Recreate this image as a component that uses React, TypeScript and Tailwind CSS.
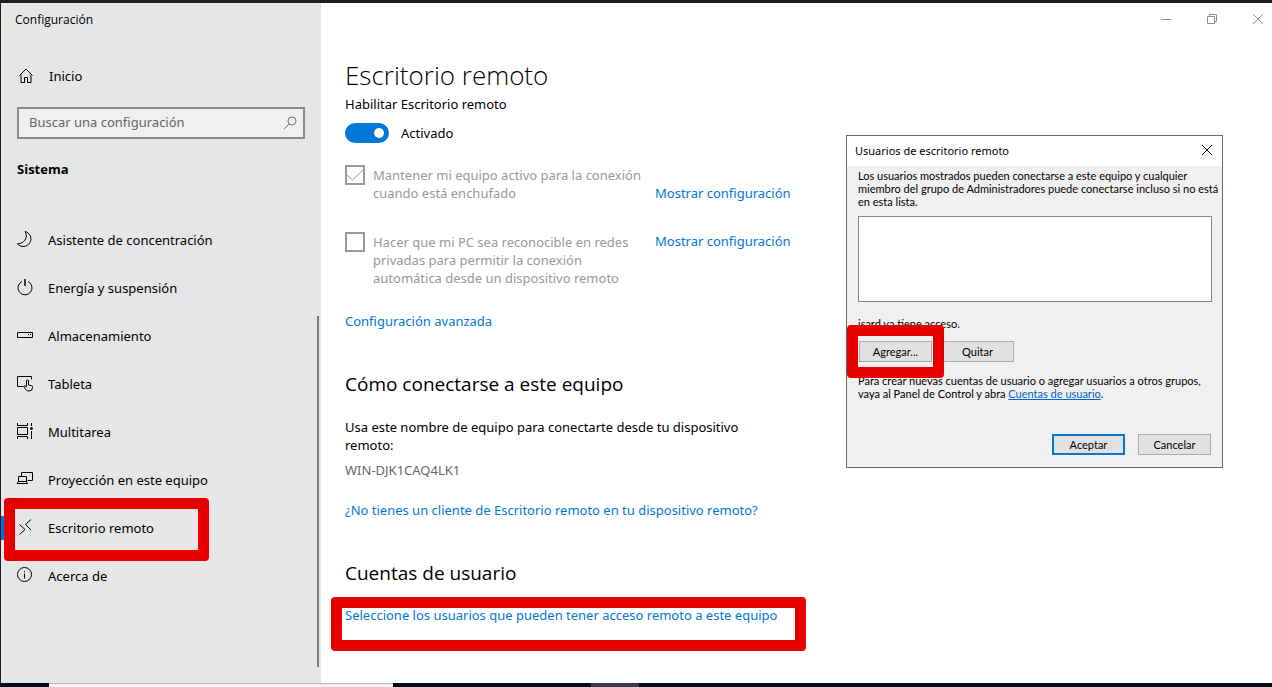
import { useState, type ReactNode } from "react";

type NavItem = {
  label: string;
  icon: ReactNode;
  active?: boolean;
};

function Icon({ children }: { children: ReactNode }) {
  return (
    <svg
      aria-hidden="true"
      viewBox="0 0 16 16"
      className="h-4 w-4 shrink-0 overflow-visible"
      fill="none"
      stroke="currentColor"
      strokeWidth="1"
    >
      {children}
    </svg>
  );
}

const NAV_ITEMS: NavItem[] = [
  {
    label: "Asistente de concentración",
    icon: (
      <Icon>
        <path d="M8 -.5A7.600 7.600 0 1 1 .5 11.800C5.500 11.800 9.300 8.100 9.300 4 9.300 2.500 8.900 .6 8 -.5Z" />
      </Icon>
    ),
  },
  {
    label: "Energía y suspensión",
    icon: (
      <Icon>
        <path d="M5 1.500a7 7 0 1 0 6 0" />
        <path d="M8 -1v7" strokeWidth="1.500" />
      </Icon>
    ),
  },
  {
    label: "Almacenamiento",
    icon: (
      <Icon>
        <path d="M.5 4.500h15v5H.5z" />
        <path d="M11 6.500h1M13 6.500h1" />
      </Icon>
    ),
  },
  {
    label: "Tableta",
    icon: (
      <Icon>
        <path d="M6.500 10.500h-6v-10h14v3" />
        <path d="M9.500 10.500V5a1 1 0 0 1 2 0v4l3 .7a1.200 1.200 0 0 1 1 1.300v.5a3.500 3.500 0 0 1-3.500 3.500c-2 0-3-.8-3.800-2.300L7 10.800c-.3-1 .8-1.400 1.500-.8l1 1.200" />
      </Icon>
    ),
  },
  {
    label: "Multitarea",
    icon: (
      <Icon>
        <path d="M.5 3.500h10v7H.5zM.5 -1v2.500h10V-1M.5 15v-2.500h10V15M14.500 -1v3M14.500 7v8" />
        <circle cx="14.500" cy="4.500" r="1" fill="currentColor" />
      </Icon>
    ),
  },
  {
    label: "Proyección en este equipo",
    icon: (
      <Icon>
        <path d="M4.500 4.500v-4h11v8h-5" />
        <path d="M1.500 10V4.500h8V10M0 11.500L1.500 9.500h8l1 2z" />
      </Icon>
    ),
  },
  {
    label: "Escritorio remoto",
    active: true,
    icon: (
      <Icon>
        <path d="M2.500 4.500l5.500 5-5.500 5M14 -.5l-5.500 5 5.500 5.500" />
      </Icon>
    ),
  },
  {
    label: "Acerca de",
    icon: (
      <Icon>
        <circle cx="7.500" cy="6.500" r="7" />
        <path d="M7.500 5.500v5M7.500 3v1.200" />
      </Icon>
    ),
  },
];

function Highlight({ className }: { className: string }) {
  return (
    <span
      aria-hidden="true"
      className={`pointer-events-none absolute z-10 rounded-[4px] border-[11px] border-[#e80000] ${className}`}
    />
  );
}

function Sidebar() {
  return (
    <aside className="relative flex w-80 shrink-0 flex-col bg-[#e6e6e6]">
      <div className="flex h-[34px] items-center px-[14px] font-['Open_Sans',sans-serif] text-[12px]">
        Configuración
      </div>

      <a href="#inicio" className="mt-[15px] flex h-12 items-center gap-[14px] px-[18px]">
        <Icon>
          <path d="M.5 7.500L7 1l6.500 6.500M2 6.500v8h3.500v-5h3v5H12v-8" />
        </Icon>
        Inicio
      </a>

      <div className="mx-4 mt-[7px] flex h-8 items-center border-2 border-[#8a8a8a] bg-[#f0f0f0] pr-1.5 pl-[10px]">
        <input
          type="text"
          aria-label="Buscar una configuración"
          placeholder="Buscar una configuración"
          className="h-5 min-w-0 flex-1 bg-transparent pb-0.5 outline-none placeholder:text-[#666666]"
        />
        <svg
          aria-hidden="true"
          viewBox="0 0 14 14"
          className="h-[14px] w-[14px] text-[#777777]"
          fill="none"
          stroke="currentColor"
        >
          <circle cx="9" cy="5" r="4" />
          <path d="M6 8L1 13" />
        </svg>
      </div>

      <h2 className="mx-4 mt-[18px] font-['Open_Sans',sans-serif] leading-6 font-bold">Sistema</h2>

      <nav className="mt-[35px] pb-4">
        <ul>
          {NAV_ITEMS.map((item) => (
            <li key={item.label} className="relative">
              {item.active ? (
                <span className="absolute top-3 left-0 h-6 w-1 bg-[#0078d7]" />
              ) : null}
              <a
                href="#seccion"
                aria-current={item.active ? "page" : undefined}
                className="flex h-12 items-center gap-[15px] px-4"
              >
                {item.icon}
                {item.label}
              </a>
              {item.active ? <Highlight className="-top-1.5 left-[3px] h-[63px] w-[205px]" /> : null}
            </li>
          ))}
        </ul>
      </nav>

      <div className="absolute top-[313px] right-0.5 bottom-4 w-0.5 bg-[#7a7a7a]" />
    </aside>
  );
}

function WindowControls() {
  const button = "flex h-8 w-7 items-center justify-center";

  return (
    <div className="flex justify-end gap-[18px] pb-0.5 text-[#8f8f8f]">
      <button type="button" aria-label="Minimizar" className={button}>
        <svg viewBox="0 0 10 10" className="h-[10px] w-[10px]" fill="none" stroke="currentColor">
          <path d="M0 5.500h10" />
        </svg>
      </button>
      <button type="button" aria-label="Restaurar" className={button}>
        <svg viewBox="0 0 10 10" className="h-[10px] w-[10px]" fill="none" stroke="currentColor">
          <path d="M.5 2.500h7v7h-7zM2.500 2.500v-2h7v7h-2" />
        </svg>
      </button>
      <button type="button" aria-label="Cerrar" className={button}>
        <svg viewBox="0 0 10 10" className="h-[10px] w-[10px]" fill="none" stroke="currentColor">
          <path d="M0 0l10 10M10 0L0 10" />
        </svg>
      </button>
    </div>
  );
}

function OptionRow(props: {
  id: string;
  checked: boolean;
  label: string;
  className: string;
  linkClassName: string;
}) {
  const { id, checked, label, className, linkClassName } = props;

  return (
    <div className={`flex ${className}`}>
      <div className="flex w-[310px] shrink-0 gap-2">
        <span className="relative h-5 w-5 shrink-0">
          <input
            id={id}
            type="checkbox"
            checked={checked}
            disabled
            readOnly
            className="block h-5 w-5 appearance-none border-2 border-[#999999] bg-white"
          />
          {checked ? (
            <svg
              aria-hidden="true"
              viewBox="0 0 20 20"
              className="absolute inset-0 h-5 w-5"
              fill="none"
              stroke="#999999"
            >
              <path d="M2 10l5.500 5L18 5" />
            </svg>
          ) : null}
        </span>
        <label htmlFor={id} className="w-[275px] pt-px text-[#999999]">
          {label}
        </label>
      </div>
      <a href="#configuracion" className={`text-[#0078d7] ${linkClassName}`}>
        Mostrar configuración
      </a>
    </div>
  );
}

function RemoteDesktopSettings() {
  const [enabled, setEnabled] = useState(true);

  return (
    <div className="px-6">
      <h1 className="mt-[18px] font-['Open_Sans',sans-serif] text-[26px] leading-10 font-light">
        Escritorio remoto
      </h1>
      <label htmlFor="habilitar" className="block">
        Habilitar Escritorio remoto
      </label>
      <div className="mt-[10px] flex h-5 items-center gap-3">
        <input
          id="habilitar"
          type="checkbox"
          role="switch"
          checked={enabled}
          onChange={(e) => setEnabled(e.target.checked)}
          className="flex h-5 w-11 appearance-none items-center rounded-full bg-[#999999] px-[5px] before:h-[10px] before:w-[10px] before:rounded-full before:bg-white checked:justify-end checked:bg-[#0078d7]"
        />
        <span>{enabled ? "Activado" : "Desactivado"}</span>
      </div>

      <OptionRow
        id="activo"
        checked
        label="Mantener mi equipo activo para la conexión cuando está enchufado"
        className="mt-[22px]"
        linkClassName="self-end"
      />
      <OptionRow
        id="reconocible"
        checked={false}
        label="Hacer que mi PC sea reconocible en redes privadas para permitir la conexión automática desde un dispositivo remoto"
        className="mt-[30px]"
        linkClassName="self-start"
      />

      <p className="mt-[25px]">
        <a href="#avanzada" className="text-[#0078d7]">
          Configuración avanzada
        </a>
      </p>

      <h2 className="mt-10 font-['Open_Sans',sans-serif] text-[19px] leading-7">
        Cómo conectarse a este equipo
      </h2>
      <p className="mt-5 max-w-[420px]">
        Usa este nombre de equipo para conectarte desde tu dispositivo remoto:
      </p>
      <p className="mt-[7px] text-[#666666]">WIN-DJK1CAQ4LK1</p>
      <p className="mt-[22px]">
        <a href="#cliente" className="text-[#0078d7]">
          ¿No tienes un cliente de Escritorio remoto en tu dispositivo remoto?
        </a>
      </p>

      <h2 className="mt-10 font-['Open_Sans',sans-serif] text-[19px] leading-7">Cuentas de usuario</h2>
      <p className="relative mt-[19px]">
        <a href="#usuarios" className="text-[#0078d7]">
          Seleccione los usuarios que pueden tener acceso remoto a este equipo
        </a>
        <Highlight className="-top-[9px] -left-[14px] h-[54px] w-[475px]" />
      </p>
    </div>
  );
}

function DialogButton({ children, primary }: { children: ReactNode; primary?: boolean }) {
  return (
    <button
      type="button"
      className={
        primary
          ? "h-[21px] w-[73px] border-2 border-[#0078d7] bg-[#e1e1e1]"
          : "h-[21px] w-[73px] border border-[#adadad] bg-[#e1e1e1]"
      }
    >
      <span className="block leading-[13px]">{children}</span>
    </button>
  );
}

function RemoteUsersDialog() {
  return (
    <section
      role="dialog"
      aria-labelledby="dialogo-titulo"
      className="absolute top-[132px] right-[49px] w-[377px] border border-[#6b6b6f] bg-[#f0f0f0] font-['Lato',sans-serif] text-[11px] leading-[13px] text-black"
    >
      <header className="flex h-[30px] items-center justify-between bg-white pr-[10px] pb-0.5 pl-2">
        <h2 id="dialogo-titulo" className="font-['Noto_Sans','Open_Sans',sans-serif]">
          Usuarios de escritorio remoto
        </h2>
        <button type="button" aria-label="Cerrar cuadro de diálogo">
          <svg viewBox="0 0 10 10" className="h-[10px] w-[10px] overflow-visible" fill="none" stroke="currentColor">
            <path d="M0 0l10 10M10 0L0 10" />
          </svg>
        </button>
      </header>

      <p className="pt-[3px] pl-[11px]">
        Los usuarios mostrados pueden conectarse a este equipo y cualquier miembro del grupo de
        Administradores puede conectarse incluso si no está en esta lista.
      </p>

      <div className="pt-2 pr-[10px] pb-3 pl-[11px]">
        <div role="listbox" aria-label="Usuarios" className="h-[86px] border border-[#828790] bg-white" />
        <p className="mt-[15px]">isard ya tiene acceso.</p>

        <div className="mt-[11px] flex gap-[9px] pl-px">
          <span className="relative flex">
            <DialogButton>Agregar...</DialogButton>
            <Highlight className="-inset-x-3 -inset-y-4" />
          </span>
          <DialogButton>Quitar</DialogButton>
        </div>

        <p className="mt-3">
          Para crear nuevas cuentas de usuario o agregar usuarios a otros grupos, vaya al Panel de
          Control y abra{" "}
          <a href="#cuentas" className="text-[#0066cc] underline">
            Cuentas de usuario
          </a>
          .
        </p>

        <div className="mt-[34px] flex justify-end gap-[13px] pr-px">
          <DialogButton primary>Aceptar</DialogButton>
          <DialogButton>Cancelar</DialogButton>
        </div>
      </div>
    </section>
  );
}

function Taskbar() {
  return (
    <footer className="flex h-1 bg-[#000c18]">
      <div className="ml-[49px] w-[344px] border-t border-[#b8b8b8] bg-[#f2f2f2]" />
      <div className="ml-[198px] w-12 bg-[#333d48]" />
    </footer>
  );
}

export default function App() {
  return (
    <div className="flex min-h-screen flex-col bg-white font-['Noto_Sans','Open_Sans',sans-serif] text-[13px] leading-[18px] text-black">
      <div className="h-[3px] bg-[#201f20]" />
      <div className="relative flex flex-1 border-l border-[#201f20]">
        <Sidebar />
        <main className="min-w-0 flex-1">
          <WindowControls />
          <RemoteDesktopSettings />
        </main>
        <RemoteUsersDialog />
      </div>
      <Taskbar />
    </div>
  );
}
